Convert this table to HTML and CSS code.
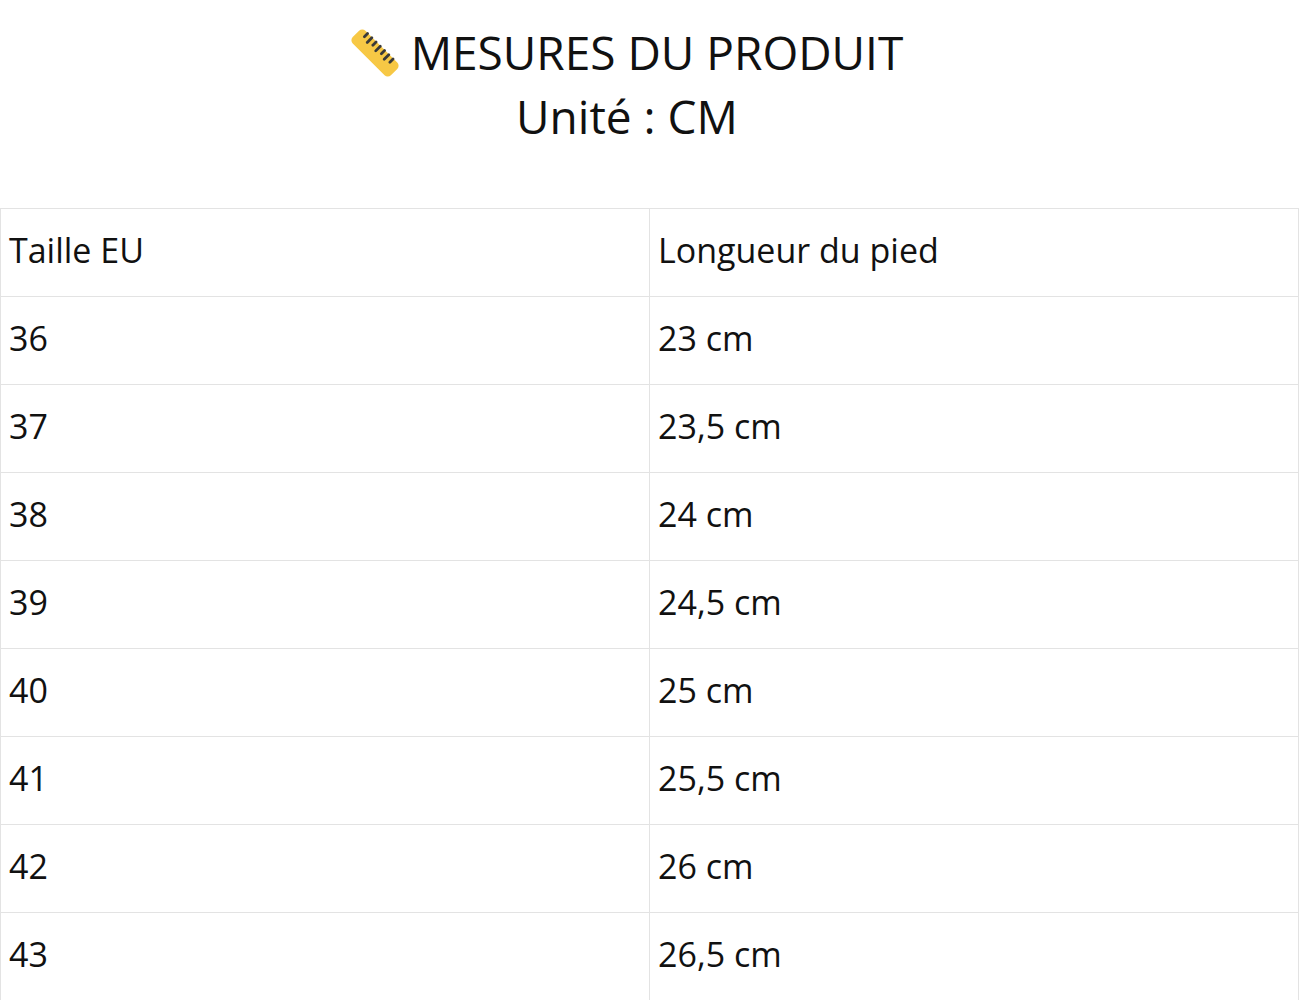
FILE: index.html
```html
<!DOCTYPE html>
<html lang="fr">
<head>
<meta charset="utf-8">
<title>Mesures du produit</title>
<link rel="stylesheet" href="styles.css">
</head>
<body>
<header class="title">
  <div class="line1"><svg class="ruler" viewBox="0 0 48 48" width="48" height="48" aria-hidden="true"><g transform="rotate(45 24 24)"><rect x="-3" y="15" width="54" height="18" rx="4.5" fill="#f7c845"/><g stroke="#3a3a3a" stroke-width="2.8" stroke-linecap="round"><line x1="5" y1="15.5" x2="5" y2="20"/><line x1="11" y1="15.5" x2="11" y2="22"/><line x1="17" y1="15.5" x2="17" y2="20"/><line x1="23" y1="15.5" x2="23" y2="22"/><line x1="29" y1="15.5" x2="29" y2="20"/><line x1="35" y1="15.5" x2="35" y2="22"/><line x1="41" y1="15.5" x2="41" y2="20"/></g></g></svg> MESURES DU PRODUIT</div>
  <div class="line2">Unité : CM</div>
</header>
<table class="sizes">
  <tr><td>Taille EU</td><td>Longueur du pied</td></tr>
  <tr><td>36</td><td>23 cm</td></tr>
  <tr><td>37</td><td>23,5 cm</td></tr>
  <tr><td>38</td><td>24 cm</td></tr>
  <tr><td>39</td><td>24,5 cm</td></tr>
  <tr><td>40</td><td>25 cm</td></tr>
  <tr><td>41</td><td>25,5 cm</td></tr>
  <tr><td>42</td><td>26 cm</td></tr>
  <tr><td>43</td><td>26,5 cm</td></tr>
</table>
</body>
</html>
```
FILE: styles.css
```css
html, body {
  margin: 0;
  padding: 0;
  background: #ffffff;
}
body {
  font-family: "Open Sans", "Liberation Sans", sans-serif;
  color: #111111;
}
.title {
  text-align: center;
  font-size: 46px;
  line-height: 64px;
  padding: 20px 46px 0 0;
  height: 208px;
  box-sizing: border-box;
}
.ruler {
  width: 48px;
  height: 48px;
  vertical-align: -7px;
}
.sizes {
  width: 1299px;
  border-collapse: collapse;
  table-layout: fixed;
  font-size: 34px;
}
.sizes td {
  border: 1px solid #e3e3e3;
  height: 88px;
  padding: 0 8px 5px 8px;
  vertical-align: middle;
  box-sizing: border-box;
}
```
